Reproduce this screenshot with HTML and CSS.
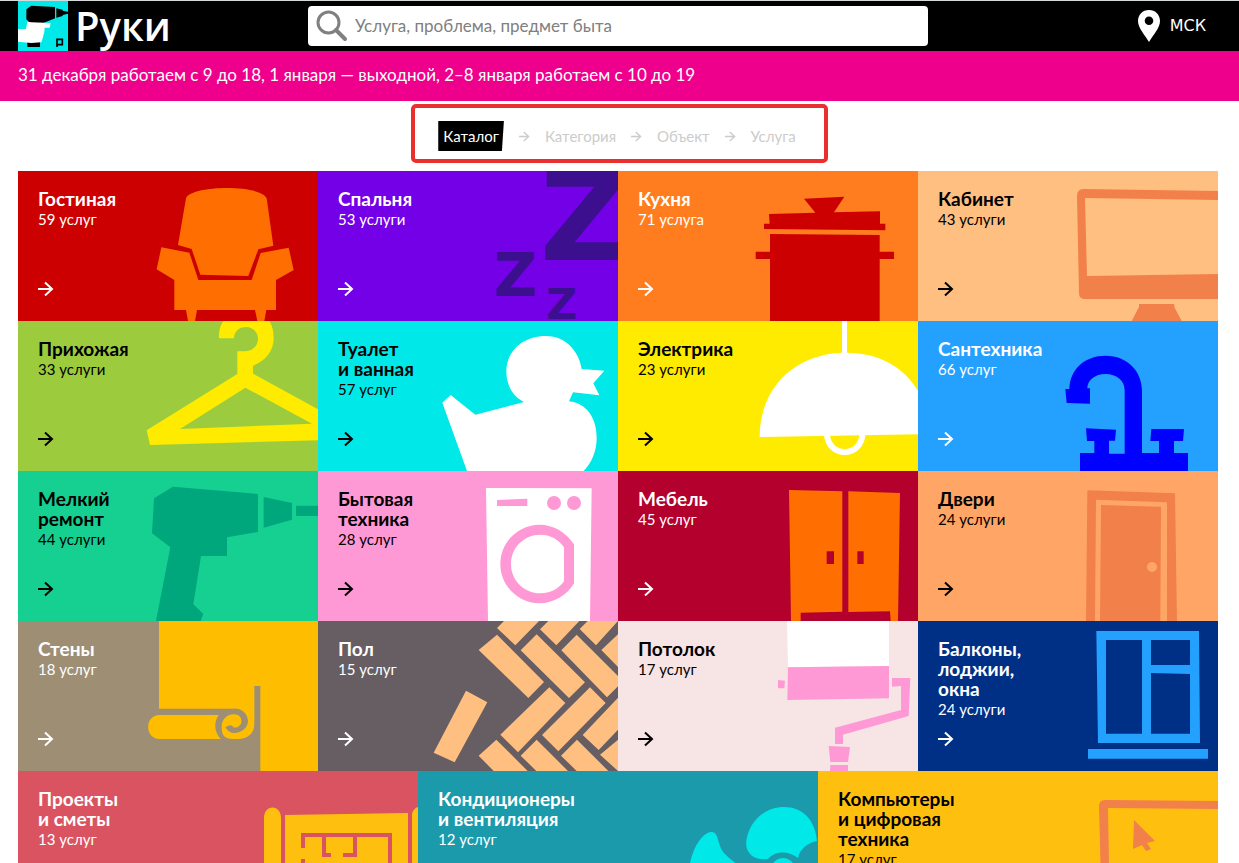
FILE: index.html
```html
<!DOCTYPE html>
<html lang="ru">
<head>
<meta charset="utf-8">
<meta name="viewport" content="width=device-width, initial-scale=1">
<title>Руки</title>
<link rel="stylesheet" href="styles.css">
</head>
<body>
<svg class="defs" aria-hidden="true">
  <symbol id="arrow" viewBox="0 0 16 16"><path d="M0 8H14M7 1.500L14 8L7 14.500" fill="none" stroke="currentColor" stroke-width="2"/></symbol>
</svg>

<header class="header">
  <a class="logo" href="#" aria-label="Руки">
    <svg class="logo-mark" viewBox="0 0 150 150" aria-hidden="true">
      <path fill="#00e8e8" d="M0 0H150V150H0z"/>
      <path fill="#000" d="M25 25L40 14L111 18V52L76 66H36L25 55zM115 22L134 26V45L115 50zM134 29L150 32V38L134 42zM28 120H66V138H28z"/>
      <path fill="#fff" d="M28 62L40 64L98 66L95 80H80L79 92L75 108L70 124L40 126L0 122V84H24z"/>
      <path fill="none" stroke="#000" stroke-width="5" d="M117 138V115H133V131H119"/>
    </svg>
    <span class="logo-name">Руки</span>
  </a>
  <form class="search" role="search">
    <svg class="search-icon" viewBox="0 0 32 32" aria-hidden="true"><circle cx="12.500" cy="12.500" r="10.500" fill="none" stroke="#808080" stroke-width="3"/><path d="M20 20L29 29" stroke="#808080" stroke-width="4" stroke-linecap="round"/></svg>
    <input class="search-input" type="text" aria-label="Поиск" placeholder="Услуга, проблема, предмет быта">
  </form>
  <a class="city" href="#">
    <svg class="city-pin" viewBox="0 0 22 32" aria-hidden="true"><path fill="#fff" fill-rule="evenodd" d="M11 0C4.500 0 0 4.800 0 11C0 18 7 25 11 32C15 25 22 18 22 11C22 4.800 17.500 0 11 0zM11 6.500A4.300 4.300 0 1 1 11 15.100A4.300 4.300 0 1 1 11 6.500z"/></svg>
    <span>МСК</span>
  </a>
</header>

<p class="notice">31 декабря работаем с 9 до 18, 1 января — выходной, 2–8 января работаем с 10 до 19</p>

<div class="crumbs-row">
  <nav class="crumbs" aria-label="Навигация">
    <a class="crumb crumb-current" href="#">Каталог</a>
    <svg class="crumb-arrow"><use href="#arrow"/></svg>
    <span class="crumb">Категория</span>
    <svg class="crumb-arrow"><use href="#arrow"/></svg>
    <span class="crumb">Объект</span>
    <svg class="crumb-arrow"><use href="#arrow"/></svg>
    <span class="crumb">Услуга</span>
  </nav>
</div>

<main class="catalog">
  <div class="tiles">
    <a class="tile light living" href="#">
      <svg class="art" viewBox="0 0 900 450" aria-hidden="true"><path fill="#ff6e00" d="M504 82C520 42 730 40 746 82L766 224L721 235L691 315L547 311L521 234L480 222zM430 229L514 245L541 327H701L728 246L812 230L827 297L774 327V417H745L739 450H718L711 417H537L531 450H510L504 417H469V327L416 295z"/></svg>
      <h2 class="title">Гостиная</h2><p class="count">59 услуг</p><svg class="go"><use href="#arrow"/></svg>
    </a>
    <a class="tile light bedroom" href="#">
      <svg class="art zzz" viewBox="0 0 900 450" aria-hidden="true"><text x="665" y="266" font-size="375">Z</text><text x="527" y="375" font-size="180">Z</text><text x="685" y="444" font-size="128">Z</text></svg>
      <h2 class="title">Спальня</h2><p class="count">53 услуги</p><svg class="go"><use href="#arrow"/></svg>
    </a>
    <a class="tile light kitchen" href="#">
      <svg class="art" viewBox="0 0 900 450" aria-hidden="true"><path fill="#c00" d="M558 83L679 77L648 124L786 121V158H802V178L438 174V158H455L453 129L592 125zM456 189L785 192V242H828V264H785V450H456V264H413V242H456z"/></svg>
      <h2 class="title">Кухня</h2><p class="count">71 услуга</p><svg class="go"><use href="#arrow"/></svg>
    </a>
    <a class="tile dark office" href="#">
      <svg class="art" viewBox="0 0 900 450" aria-hidden="true"><path fill="#f2804b" fill-rule="evenodd" d="M497 54L900 60V384H500Q483 384 483 366L477 75Q477 54 497 54zM501 81L507 315L900 309V87zM663 399H768L770 410L791 450H641L663 408z"/></svg>
      <h2 class="title">Кабинет</h2><p class="count">43 услуги</p><svg class="go"><use href="#arrow"/></svg>
    </a>

    <a class="tile dark hallway" href="#">
      <svg class="art" viewBox="0 0 900 450" aria-hidden="true"><path fill="#ffeb00" fill-rule="evenodd" d="M616 0H754C765 18 767 35 767 55C766 90 742 121 705 134V158L900 265V358L396 372L386 328L658 159V91H681C704 91 720 74 720 53C720 33 704 18 684 18C663 18 648 32 648 52H603C603 30 606 14 616 0zM682 200L486 324L882 308z"/></svg>
      <h2 class="title">Прихожая</h2><p class="count">33 услуги</p><svg class="go"><use href="#arrow"/></svg>
    </a>
    <a class="tile dark bathroom" href="#">
      <svg class="art" viewBox="0 0 900 450" aria-hidden="true"><path fill="#fff" d="M447 450L373 245L398 222L472 281L618 243C582 224 565 190 565 151C565 90 615 45 684 45C745 45 784 94 791 144L859 149L826 187L844 223L765 214L753 241C806 246 836 292 836 350C836 390 821 425 797 450z"/></svg>
      <h2 class="title">Туалет<br>и ванная</h2><p class="count">57 услуг</p><svg class="go"><use href="#arrow"/></svg>
    </a>
    <a class="tile dark electric" href="#">
      <svg class="art" viewBox="0 0 900 450" aria-hidden="true"><path fill="#fff" d="M672 0H687V95C785 96 860 140 900 210V340L425 348C425 200 530 100 672 95z"/><path fill="none" stroke="#fff" stroke-width="18" d="M627 340A53 53 0 1 0 733 340"/></svg>
      <h2 class="title">Электрика</h2><p class="count">23 услуги</p><svg class="go"><use href="#arrow"/></svg>
    </a>
    <a class="tile light plumbing" href="#">
      <svg class="art" viewBox="0 0 900 450" aria-hidden="true"><path fill="#00f" d="M442 204H454C456 144 500 104 563 104C628 104 672 150 672 210V396H723V360H697L700 324H798L795 360H768V396H810V450H486V396H529V360H507L504 322L594 326L591 359H573V398H620V208C620 178 595 159 563 159C530 159 508 178 508 202H516V248L446 246z"/></svg>
      <h2 class="title">Сантехника</h2><p class="count">66 услуг</p><svg class="go"><use href="#arrow"/></svg>
    </a>

    <a class="tile dark repair" href="#">
      <svg class="art" viewBox="0 0 900 450" aria-hidden="true"><path fill="#00a67c" d="M408 82L465 47L720 69V183L627 199V255H549L526 400L556 429L548 450H414L457 229L402 187zM737 78L822 96V146L737 170zM834 104H900V135H834z"/></svg>
      <h2 class="title">Мелкий<br>ремонт</h2><p class="count">44 услуги</p><svg class="go"><use href="#arrow"/></svg>
    </a>
    <a class="tile dark appliances" href="#">
      <svg class="art" viewBox="0 0 900 450" aria-hidden="true"><path fill="#fff" d="M504 51L821 52L816 450H510z"/><path fill="#ff99d6" fill-rule="evenodd" d="M537 87L628 83V105H537zM768 220C745 184 706 161 665 161C600 161 547 214 547 279C547 344 600 397 665 397C706 397 748 373 768 337zM738 229V331C722 354 696 367 667 367C618 367 579 328 579 279C579 230 618 191 667 191C696 191 722 205 738 229z"/><circle cx="708" cy="96" r="21" fill="#ff99d6"/><circle cx="768" cy="96" r="21" fill="#ff99d6"/></svg>
      <h2 class="title">Бытовая<br>техника</h2><p class="count">28 услуг</p><svg class="go"><use href="#arrow"/></svg>
    </a>
    <a class="tile light furniture" href="#">
      <svg class="art" viewBox="0 0 900 450" aria-hidden="true"><path fill="#ff6e00" fill-rule="evenodd" d="M513 57L673 61V422L548 425V450H519zM691 61L846 66L840 450H818L816 421L691 423zM626 241H648V279H626zM718 241H737V279H718z"/></svg>
      <h2 class="title">Мебель</h2><p class="count">45 услуг</p><svg class="go"><use href="#arrow"/></svg>
    </a>
    <a class="tile dark doors" href="#">
      <svg class="art" viewBox="0 0 900 450" aria-hidden="true"><path fill="#f2804b" fill-rule="evenodd" d="M508 58L771 67L777 450H747V94L534 86L531 450H504zM549 102L729 107L727 450H546zM702 273A15 15 0 1 0 702 303A15 15 0 1 0 702 273z"/></svg>
      <h2 class="title">Двери</h2><p class="count">24 услуги</p><svg class="go"><use href="#arrow"/></svg>
    </a>

    <a class="tile light walls" href="#">
      <svg class="art" viewBox="0 0 900 450" aria-hidden="true"><path fill="#ffbd00" d="M423 0H900V450H727V195H709V310C709 338 688 354 660 354H645C615 354 611 340 611 316C611 294 629 280 648 280C665 280 672 292 670 304C668 316 656 322 646 319C642 310 635 311 622 319C631 333 641 337 651 336C674 334 690 318 690 299C688 275 668 261 645 263H423zM425 282H602C587 304 588 332 608 354H425C379 354 379 282 425 282z"/></svg>
      <h2 class="title">Стены</h2><p class="count">18 услуг</p><svg class="go"><use href="#arrow"/></svg>
    </a>
    <a class="tile light floor" href="#">
      <svg class="art" viewBox="0 0 900 450" aria-hidden="true"><path fill="#ffbf80" d="M444 209L508 244L410 424L347 395zM482 87L537 41L678 183L631 231zM608 88L656 40L801 184L753 231zM730 88L776 41L900 165V196L867 229zM850 87L900 40V138zM537 21L558 0H663L592 73zM666 25L691 0H784L715 73zM785 24L809 0H900L834 73zM694 199L742 246L600 394L547 341zM816 199L863 246L721 391L672 342zM900 230V326L842 387L794 342zM482 404L535 356L629 450H527zM608 404L656 356L750 450H655zM729 404L777 356L871 450H776zM846 401L900 356V450z"/></svg>
      <h2 class="title">Пол</h2><p class="count">15 услуг</p><svg class="go"><use href="#arrow"/></svg>
    </a>
    <a class="tile dark ceiling" href="#">
      <svg class="art" viewBox="0 0 900 450" aria-hidden="true"><path fill="#fff" d="M507 0H813V135L510 139z"/><path fill="#ff99d6" d="M510 139L813 135V232L508 237zM480 177L501 179L499 202H480zM822 171H877L872 285L675 341V369H651V320L849 267V195L822 197zM632 375L696 378L690 423H637zM637 432H690V450H636z"/></svg>
      <h2 class="title">Потолок</h2><p class="count">17 услуг</p><svg class="go"><use href="#arrow"/></svg>
    </a>
    <a class="tile light windows" href="#">
      <svg class="art" viewBox="0 0 900 450" aria-hidden="true"><path fill="#24a1ff" fill-rule="evenodd" d="M535 30H843L846 366H540zM564 57V338H672V57zM699 57V132H816V57zM699 156V338H816V159zM510 384H870V413H510z"/></svg>
      <h2 class="title">Балконы,<br>лоджии,<br>окна</h2><p class="count">24 услуги</p><svg class="go"><use href="#arrow"/></svg>
    </a>
  </div>
  <div class="tiles tiles-wide">
    <a class="tile light projects" href="#">
      <svg class="art" viewBox="0 0 300 150" aria-hidden="true"><path fill="#ffbf0f" d="M146 150V47C146 33 163 33 163 47V150zM167 44L290 42V150H167zM294 150V44C294 40 297 37 300 36V150z"/><path fill="none" stroke="#d95460" stroke-width="4" d="M185 77V64H272V110M185 88V110H272M206 65V84H213M225 84H237V65"/></svg>
      <h2 class="title">Проекты<br>и сметы</h2><p class="count">13 услуг</p><svg class="go"><use href="#arrow"/></svg>
    </a>
    <a class="tile light climate" href="#">
      <svg class="art" viewBox="0 0 300 150" aria-hidden="true"><path fill="#00e8e8" d="M229 66C234 46 250 36 266 36C284 36 297 48 299 70C289 72 282 78 280 87C271 80 258 79 250 88C236 90 225 82 229 66zM171 98C174 77 184 62 193 61C202 60 198 75 208 84C216 92 222 94 225 100L215 130H171zM300 92C294 93 290 95 287 98L300 110z"/><circle cx="265" cy="99" r="12" fill="#00e8e8"/></svg>
      <h2 class="title">Кондиционеры<br>и вентиляция</h2><p class="count">12 услуг</p><svg class="go"><use href="#arrow"/></svg>
    </a>
    <a class="tile dark computers" href="#">
      <svg class="art" viewBox="0 0 300 150" aria-hidden="true"><path fill="#f2804b" d="M187 29L300 30V38L190 37L192 150H184L181 35Q181 29 187 29zM216 49L237 70L229 72L233 78L228 80L224 74L215 78z"/></svg>
      <h2 class="title">Компьютеры<br>и цифровая<br>техника</h2><p class="count">17 услуг</p><svg class="go"><use href="#arrow"/></svg>
    </a>
  </div>
</main>
</body>
</html>
```
FILE: styles.css
```css
* { box-sizing: border-box; }
body { margin: 0; background: #fff; color: #000; font: 16px/20px Lato, "Open Sans", sans-serif; }
a { color: inherit; text-decoration: none; }
h2, p { margin: 0; }
.defs { display: none; }

.header { display: grid; grid-template-columns: 1fr minmax(0, 620px) 1fr; align-items: center; height: 51px; padding: 0 21px 0 18px; border-top: 1px solid #d5dcdb; background: #000; color: #fff; }
.logo { display: flex; align-items: center; gap: 7px; }
.logo-mark { width: 50px; height: 50px; }
.logo-name { font-family: "Open Sans", sans-serif; font-size: 40px; font-weight: 600; line-height: 46px; }
.search { display: flex; align-items: center; gap: 7px; height: 40px; padding: 0 8px; border-radius: 4px; background: #fff; }
.search-icon { flex: none; width: 32px; height: 32px; }
.search-input { flex: 1; min-width: 0; padding: 0; border: 0; outline: 0; background: none; font: inherit; font-size: 17px; }
.search-input::placeholder { color: #808080; opacity: 1; }
.city { display: flex; align-items: center; justify-content: flex-end; gap: 10px; padding-right: 12px; font-family: "DejaVu Sans", sans-serif; }
.city-pin { width: 22px; height: 32px; }

.notice { padding: 14px 18px 16px; background: #ee008c; color: #fff; font-size: 17px; }

.crumbs-row { display: flex; justify-content: center; padding: 3px 0 8px; }
.crumbs { display: flex; align-items: center; gap: 15px; padding: 13px 28px 8px 23px; border: 4px solid #ea2f2f; border-radius: 5px; color: #ccc; font-size: 15px; }
.crumb-current { padding: 5px; background: #000; color: #fff; clip-path: polygon(0 0, 100% 0, 97% 100%, 0 100%); }
.crumb-arrow { width: 11px; height: 11px; }

.catalog { padding: 0 21px 0 18px; }
.tiles { display: grid; grid-template-columns: repeat(4, 1fr); }
.tiles-wide { grid-template-columns: repeat(3, 1fr); }
.tile { display: flex; flex-direction: column; position: relative; min-height: 150px; padding: 18px 20px 24px; overflow: hidden; }
.art { position: absolute; right: 0; bottom: 0; width: 300px; height: 150px; }
.title, .count, .go { position: relative; }
.title { font-size: 19px; font-weight: 700; line-height: 20px; }
.count { font-size: 15px; line-height: 20px; }
.go { width: 16px; height: 16px; margin-top: auto; }
.light { color: #fff; }
.dark { color: #000; }
.zzz { fill: #3b0f8e; font-family: "DejaVu Sans", sans-serif; font-weight: 700; }

.living { background: #c00; }
.bedroom { background: #7300e6; }
.kitchen { background: #ff7d1e; }
.office { background: #ffbf80; }
.hallway { background: #9ccc3d; }
.bathroom { background: #00e8e8; }
.electric { background: #ffeb00; }
.plumbing { background: #24a1ff; }
.repair { background: #15d090; }
.appliances { background: #ff99d6; }
.furniture { background: #b3002d; }
.doors { background: #ffa666; }
.walls { background: #9e8e74; }
.floor { background: #665e63; }
.ceiling { background: #f7e4e4; }
.windows { background: #003085; }
.projects { background: #d95460; }
.climate { background: #1a9aab; }
.computers { background: #ffbf0f; }
```
